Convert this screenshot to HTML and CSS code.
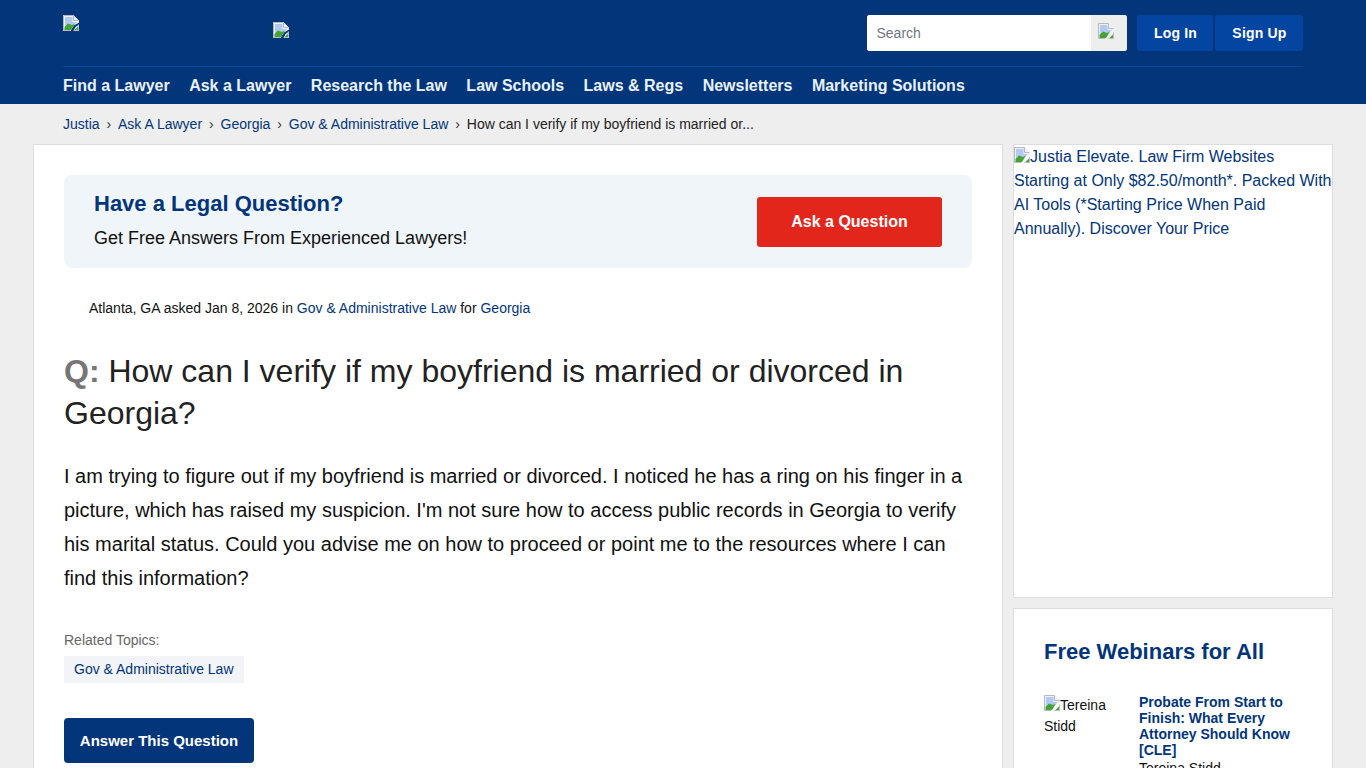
FILE: index.html
```html
<!DOCTYPE html>
<html lang="en">
<head>
<meta charset="utf-8">
<title>How can I verify if my boyfriend is married or divorced in Georgia?</title>
<link rel="stylesheet" href="styles.css">
</head>
<body>
<svg class="defs" width="0" height="0" aria-hidden="true">
  <symbol id="broken" viewBox="0 0 16 16">
    <path d="M0 0H10.5L16 5.5V7.5L11 10.5L7.5 16H0Z" fill="#eef1f6"/>
    <path d="M.5 .5H10.5V5.5H15.5" fill="none" stroke="#b4b8c0"/>
    <path d="M.5 .5V15.5H7" fill="none" stroke="#b4b8c0"/>
    <path d="M2 2H9.5V7H14L10.5 10L2 12Z" fill="#b3caf0"/>
    <path d="M1.5 15V12L5 8.5L9 10L12 8.5L8 15Z" fill="#45a336"/>
    <path d="M16 9.5V16H10.5L12.5 12Z" fill="#eef1f6"/>
    <path d="M15 11.5V15H11.5Z" fill="#45a336"/>
    <path d="M15.5 9.5V15.5H10.5" fill="none" stroke="#a9adb5" stroke-width=".8"/>
  </symbol>
</svg>
<header class="site-header">
  <div class="header-top">
    <a class="logo" href="#"><svg class="broken"><use href="#broken"/></svg></a>
    <a class="logo-sub" href="#"><svg class="broken"><use href="#broken"/></svg></a>
    <form class="search">
      <input class="search-input" type="text" placeholder="Search">
      <button class="search-btn" type="button"><svg class="broken"><use href="#broken"/></svg></button>
    </form>
    <div class="auth">
      <a class="auth-btn login" href="#">Log In</a>
      <a class="auth-btn signup" href="#">Sign Up</a>
    </div>
  </div>
  <nav class="main-nav">
    <a href="#">Find a Lawyer</a>
    <a href="#">Ask a Lawyer</a>
    <a href="#">Research the Law</a>
    <a href="#">Law Schools</a>
    <a href="#">Laws &amp; Regs</a>
    <a href="#">Newsletters</a>
    <a href="#">Marketing Solutions</a>
  </nav>
</header>
<div class="crumbs">
  <a href="#">Justia</a><span class="sep">›</span>
  <a href="#">Ask A Lawyer</a><span class="sep">›</span>
  <a href="#">Georgia</a><span class="sep">›</span>
  <a href="#">Gov &amp; Administrative Law</a><span class="sep">›</span>
  <span class="current">How can I verify if my boyfriend is married or...</span>
</div>
<div class="layout">
  <main class="main-card">
    <section class="promo">
      <div>
        <h2 class="promo-title">Have a Legal Question?</h2>
        <p class="promo-text">Get Free Answers From Experienced Lawyers!</p>
      </div>
      <a class="promo-btn" href="#">Ask a Question</a>
    </section>
    <p class="meta">Atlanta, GA asked Jan 8, 2026 in <a href="#">Gov &amp; Administrative Law</a> for <a href="#">Georgia</a></p>
    <h1 class="question"><span class="q">Q:</span> How can I verify if my boyfriend is married or divorced in Georgia?</h1>
    <p class="body-text">I am trying to figure out if my boyfriend is married or divorced. I noticed he has a ring on his finger in a picture, which has raised my suspicion. I'm not sure how to access public records in Georgia to verify his marital status. Could you advise me on how to proceed or point me to the resources where I can find this information?</p>
    <div class="topics-label">Related Topics:</div>
    <a class="tag" href="#">Gov &amp; Administrative Law</a>
    <a class="answer-btn" href="#">Answer This Question</a>
  </main>
  <aside class="sidebar">
    <a class="ad" href="#"><svg class="broken inline"><use href="#broken"/></svg>Justia Elevate. Law Firm Websites Starting at Only $82.50/month*. Packed With AI Tools (*Starting Price When Paid Annually). Discover Your Price</a>
    <section class="webinars">
      <h3 class="webinars-title">Free Webinars for All</h3>
      <div class="webinar">
        <div class="speaker"><svg class="broken inline"><use href="#broken"/></svg>Tereina Stidd</div>
        <div>
          <a class="webinar-title" href="#">Probate From Start to Finish: What Every Attorney Should Know [CLE]</a>
          <div class="webinar-by">Tereina Stidd</div>
        </div>
      </div>
    </section>
  </aside>
</div>
</body>
</html>
```
FILE: styles.css
```css
* { box-sizing: border-box; }
html, body { margin: 0; padding: 0; }
body {
  background: #eee;
  color: #000;
  font-family: "Liberation Sans", Arial, sans-serif;
  font-size: 16px;
}
a { color: #03357a; text-decoration: none; }
.defs { position: absolute; }
.broken { display: block; width: 16px; height: 16px; }
.broken.inline { display: inline-block; vertical-align: -1px; }

.site-header { background: #03357a; height: 104px; padding: 0 63px; }
.header-top {
  height: 67px;
  display: flex;
  align-items: flex-start;
  border-bottom: 1px solid #0a4596;
  width: 1240px;
}
.logo { margin-top: 15px; width: 210px; }
.logo-sub { margin-top: 22px; }
.search {
  margin-left: auto;
  margin-top: 15px;
  display: flex;
  width: 260px;
  height: 36px;
  border-radius: 3px;
  overflow: hidden;
  background: #fff;
}
.search-input {
  flex: 1;
  min-width: 0;
  border: 0;
  padding: 0 9.5px;
  font: 14px "Liberation Sans", Arial, sans-serif;
  outline: none;
  background: #fff;
}
.search-input::placeholder { color: #6f7680; opacity: 1; }
.search-btn {
  width: 36px;
  border: 0;
  padding: 8px 7px 0;
  background: #eee;
  display: flex;
  align-items: flex-start;
}
.auth { display: flex; gap: 2px; margin: 15px 0 0 10px; }
.auth-btn {
  height: 36px;
  display: flex;
  align-items: center;
  justify-content: center;
  background: #0445a2;
  color: #fff;
  font-size: 14px;
  font-weight: 700;
  border-radius: 3px;
  letter-spacing: .2px;
  padding-left: 1px;
}
.login { width: 76px; }
.signup { width: 88px; }
.main-nav { display: flex; gap: 19.45px; padding-top: 9px; }
.main-nav a {
  color: #e9f1fb;
  font-size: 16px;
  font-weight: 700;
  line-height: 20px;
}

.crumbs {
  height: 40px;
  padding: 0 63px;
  display: flex;
  align-items: center;
  font-size: 14px;
}
.sep { margin: 0 6.9px; color: #333; }
.current { color: #222; }

.layout {
  display: flex;
  gap: 10px;
  align-items: flex-start;
  padding-left: 33px;
  width: 1333px;
}
.main-card {
  width: 970px;
  height: 800px;
  background: #fff;
  border: 1px solid #ddd;
  padding: 30px;
}
.promo {
  height: 93px;
  background: #f0f5f9;
  border-radius: 8px;
  padding: 0 30px 3px;
  display: flex;
  align-items: center;
  justify-content: space-between;
}
.promo-title {
  margin: 0 0 6px;
  color: #03357a;
  font-size: 22px;
  line-height: 30px;
  font-weight: 700;
}
.promo-text { margin: 0; font-size: 18px; line-height: 26px; color: #111; }
.promo-btn {
  width: 185px;
  height: 50px;
  display: flex;
  align-items: center;
  justify-content: center;
  background: #e3261c;
  color: #fff;
  font-weight: 700;
  border-radius: 3px;
  position: relative;
  top: 1.5px;
}
.meta { margin: 30px 0 0 25px; font-size: 14px; line-height: 20px; color: #111; }
.question {
  margin: 32px 0 0;
  font-size: 32px;
  line-height: 42px;
  font-weight: 400;
  color: #222;
}
.q { color: #767676; font-weight: 700; }
.body-text {
  margin: 25px 0 0;
  font-size: 20px;
  line-height: 34px;
  color: #111;
}
.topics-label { margin-top: 35px; font-size: 14px; line-height: 20px; color: #666; }
.tag {
  display: block;
  width: fit-content;
  margin-top: 6px;
  padding: 0 10px;
  height: 27px;
  line-height: 27px;
  background: #f2f4f7;
  font-size: 14px;
}
.answer-btn {
  display: flex;
  align-items: center;
  justify-content: center;
  width: 190px;
  height: 45px;
  margin-top: 35px;
  background: #03357a;
  color: #fff;
  font-weight: 700;
  font-size: 15px;
  border-radius: 4px;
}

.sidebar { width: 320px; display: flex; flex-direction: column; gap: 10px; }
.ad {
  display: block;
  height: 454px;
  background: #fff;
  border: 1px solid #ddd;
  line-height: 24px;
  font-size: 16px;
}
.webinars {
  height: 400px;
  background: #fff;
  border: 1px solid #ddd;
  padding: 30px;
}
.webinars-title { margin: 0; color: #03357a; font-size: 22px; line-height: 26px; font-weight: 700; }
.webinar { display: flex; gap: 15px; margin-top: 29px; }
.speaker { width: 80px; flex: none; font-size: 14px; line-height: 21px; color: #111; padding-top: 1px; }
.webinar-title { display: block; font-size: 14px; line-height: 16px; font-weight: 700; }
.webinar-by { font-size: 14px; line-height: 20px; color: #111; }
```
